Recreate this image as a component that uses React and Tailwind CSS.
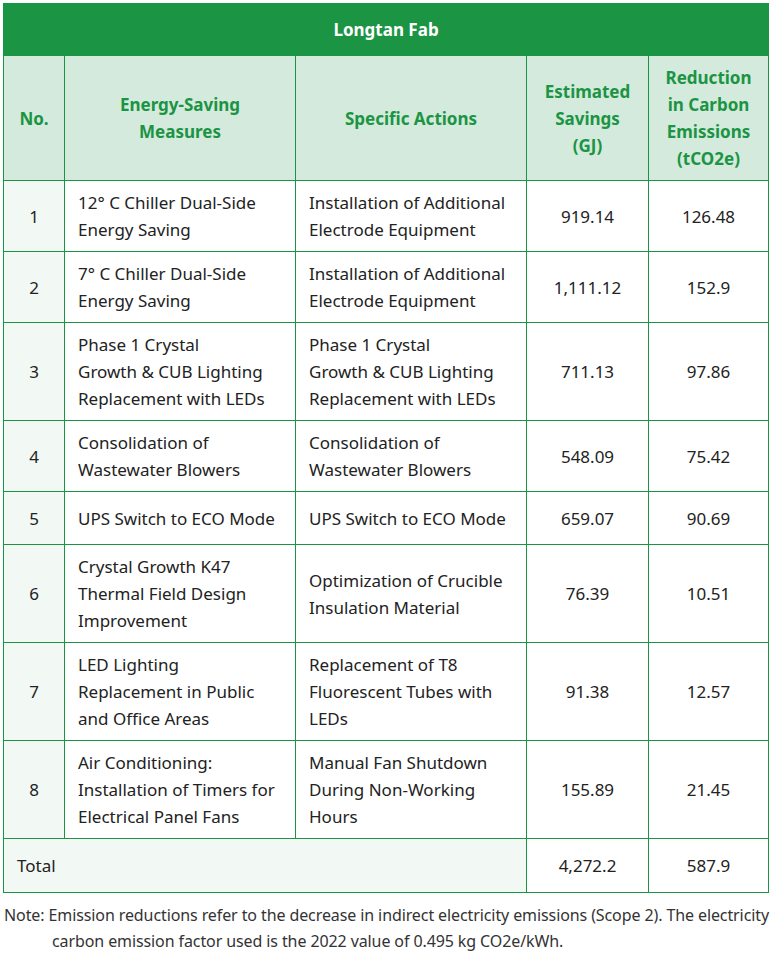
const rows = [
  { no: 1, measure: ['12° C Chiller Dual-Side', 'Energy Saving'], action: ['Installation of Additional', 'Electrode Equipment'], gj: '919.14', co2: '126.48' },
  { no: 2, measure: ['7° C Chiller Dual-Side', 'Energy Saving'], action: ['Installation of Additional', 'Electrode Equipment'], gj: '1,111.12', co2: '152.9' },
  { no: 3, measure: ['Phase 1 Crystal', 'Growth & CUB Lighting', 'Replacement with LEDs'], action: ['Phase 1 Crystal', 'Growth & CUB Lighting', 'Replacement with LEDs'], gj: '711.13', co2: '97.86' },
  { no: 4, measure: ['Consolidation of', 'Wastewater Blowers'], action: ['Consolidation of', 'Wastewater Blowers'], gj: '548.09', co2: '75.42' },
  { no: 5, measure: ['UPS Switch to ECO Mode'], action: ['UPS Switch to ECO Mode'], gj: '659.07', co2: '90.69' },
  { no: 6, measure: ['Crystal Growth K47', 'Thermal Field Design', 'Improvement'], action: ['Optimization of Crucible', 'Insulation Material'], gj: '76.39', co2: '10.51' },
  { no: 7, measure: ['LED Lighting', 'Replacement in Public', 'and Office Areas'], action: ['Replacement of T8', 'Fluorescent Tubes with', 'LEDs'], gj: '91.38', co2: '12.57' },
  { no: 8, measure: ['Air Conditioning:', 'Installation of Timers for', 'Electrical Panel Fans'], action: ['Manual Fan Shutdown', 'During Non-Working', 'Hours'], gj: '155.89', co2: '21.45' },
];

// Render pre-broken lines as in the source report
const Lines = ({ lines }) =>
  lines.map((l, i) => (
    <span key={i}>
      {l}
      {i < lines.length - 1 && <br />}
    </span>
  ));

const App = () => {
  const th = 'border border-[#1b9444] bg-[#d3eadc] text-[#1b9444] font-bold text-center align-middle px-2 py-2';
  const td = 'border border-[#1b9444] px-[13px] py-2 align-middle';

  return (
    <div className="bg-white min-h-[954px] pt-[3px] font-['Noto_Sans',sans-serif] text-[#222] text-[17px] leading-[27px]">
      <table className="ml-[3px] w-[765px] table-fixed border-collapse">
        <colgroup>
          <col className="w-[61px]" />
          <col className="w-[231px]" />
          <col className="w-[231px]" />
          <col className="w-[122px]" />
          <col className="w-[120px]" />
        </colgroup>
        <thead>
          <tr>
            <th colSpan={5} className="border border-[#1b9444] bg-[#1b9444] text-white font-bold text-center h-[52px]">
              Longtan Fab
            </th>
          </tr>
          <tr className="h-[125px]">
            <th className={th}>No.</th>
            <th className={th}>Energy-Saving<br />Measures</th>
            <th className={th}>Specific Actions</th>
            <th className={th}>Estimated<br />Savings<br />(GJ)</th>
            <th className={th}>Reduction<br />in Carbon<br />Emissions<br />(tCO2e)</th>
          </tr>
        </thead>
        <tbody>
          {rows.map((r) => (
            <tr key={r.no} className="h-[53px]">
              <td className={`${td} bg-[#f2f8f3] text-center`}>{r.no}</td>
              <td className={td}><Lines lines={r.measure} /></td>
              <td className={td}><Lines lines={r.action} /></td>
              <td className={`${td} text-center`}>{r.gj}</td>
              <td className={`${td} text-center`}>{r.co2}</td>
            </tr>
          ))}
          <tr className="h-[54px]">
            <td colSpan={3} className={`${td} bg-[#f2f8f3]`}>Total</td>
            <td className={`${td} text-center`}>4,272.2</td>
            <td className={`${td} text-center`}>587.9</td>
          </tr>
        </tbody>
      </table>
      <div className="mt-[9px] pl-[52px] -indent-[48px] text-[16px] leading-[26px] text-[#333] font-['Noto_Sans',sans-serif] tracking-[-0.1px]">
        Note: Emission reductions refer to the decrease in indirect electricity emissions (Scope 2). The electricity carbon emission factor used is the 2022 value of 0.495 kg CO2e/kWh.
      </div>
    </div>
  );
};

export default App;
